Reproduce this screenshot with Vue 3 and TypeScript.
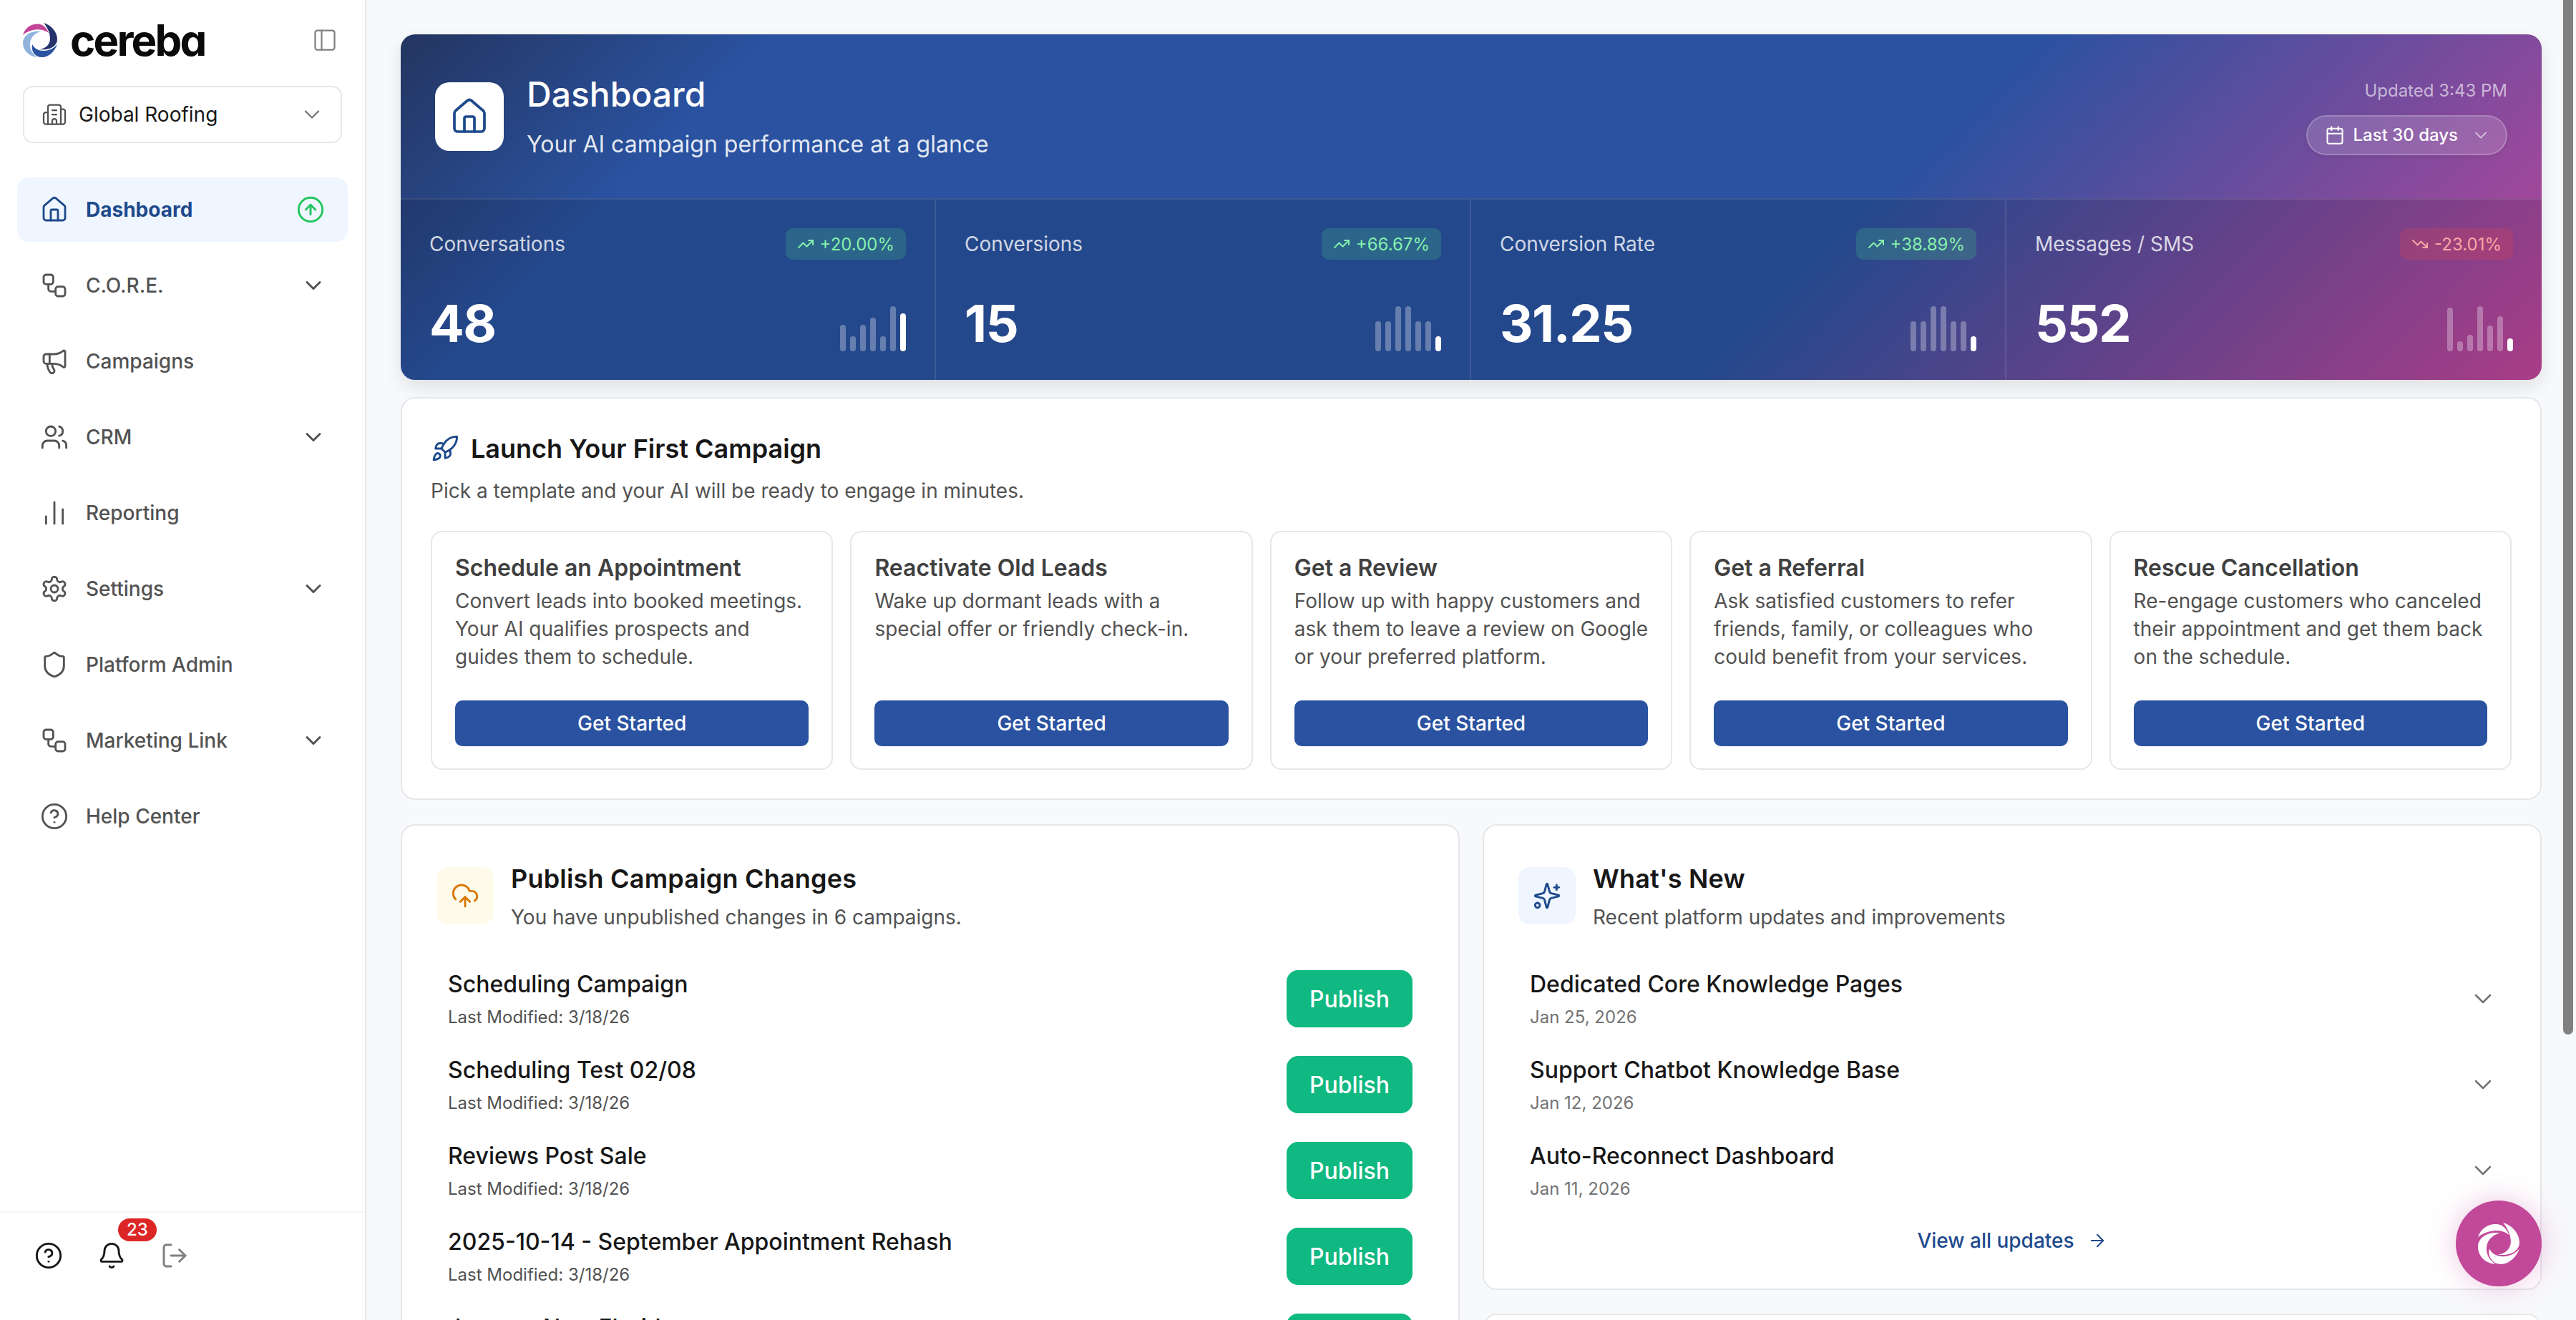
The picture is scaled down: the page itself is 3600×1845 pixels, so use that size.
<script setup lang="ts">
const icons: Record<string, string> = {
  home: '<path d="M15 21v-8a1 1 0 0 0-1-1h-4a1 1 0 0 0-1 1v8"/><path d="M3 10a2 2 0 0 1 .709-1.528l7-5.999a2 2 0 0 1 2.582 0l7 5.999A2 2 0 0 1 21 10v9a2 2 0 0 1-2 2H5a2 2 0 0 1-2-2z"/>',
  workflow: '<rect x="3" y="3" width="8" height="8" rx="2"/><path d="M7 11v4a2 2 0 0 0 2 2h4"/><rect x="13" y="13" width="8" height="8" rx="2"/>',
  megaphone: '<path d="M11 6a13 13 0 0 0 8.4-2.8A1 1 0 0 1 21 4v12a1 1 0 0 1-1.6.8A13 13 0 0 0 11 14H5a2 2 0 0 1-2-2V8a2 2 0 0 1 2-2z"/><path d="M6 14a12 12 0 0 0 2.4 7.2 2 2 0 0 0 3.2-2.4A8 8 0 0 1 10 14"/><path d="M8 6v8"/>',
  users: '<path d="M16 21v-2a4 4 0 0 0-4-4H6a4 4 0 0 0-4 4v2"/><circle cx="9" cy="7" r="4"/><path d="M22 21v-2a4 4 0 0 0-3-3.87"/><path d="M16 3.13a4 4 0 0 1 0 7.75"/>',
  chart: '<path d="M5 21v-6"/><path d="M12 21V3"/><path d="M19 21V9"/>',
  settings: '<path d="M12.22 2h-.44a2 2 0 0 0-2 2v.18a2 2 0 0 1-1 1.73l-.43.25a2 2 0 0 1-2 0l-.15-.08a2 2 0 0 0-2.73.73l-.22.38a2 2 0 0 0 .73 2.73l.15.1a2 2 0 0 1 1 1.72v.51a2 2 0 0 1-1 1.74l-.15.09a2 2 0 0 0-.73 2.73l.22.38a2 2 0 0 0 2.73.73l.15-.08a2 2 0 0 1 2 0l.43.25a2 2 0 0 1 1 1.73V20a2 2 0 0 0 2 2h.44a2 2 0 0 0 2-2v-.18a2 2 0 0 1 1-1.73l.43-.25a2 2 0 0 1 2 0l.15.08a2 2 0 0 0 2.73-.73l.22-.39a2 2 0 0 0-.73-2.73l-.15-.08a2 2 0 0 1-1-1.74v-.5a2 2 0 0 1 1-1.74l.15-.09a2 2 0 0 0 .73-2.73l-.22-.38a2 2 0 0 0-2.73-.73l-.15.08a2 2 0 0 1-2 0l-.43-.25a2 2 0 0 1-1-1.73V4a2 2 0 0 0-2-2z"/><circle cx="12" cy="12" r="3"/>',
  shield: '<path d="M20 13c0 5-3.5 7.5-7.66 8.95a1 1 0 0 1-.67-.01C7.5 20.5 4 18 4 13V6a1 1 0 0 1 1-1c2 0 4.5-1.2 6.24-2.72a1.17 1.17 0 0 1 1.52 0C14.51 3.81 17 5 19 5a1 1 0 0 1 1 1z"/>',
  help: '<circle cx="12" cy="12" r="10"/><path d="M9.09 9a3 3 0 0 1 5.83 1c0 2-3 3-3 3"/><path d="M12 17h.01"/>',
  building: '<path d="M10 12h4"/><path d="M10 8h4"/><path d="M14 21v-3a2 2 0 0 0-4 0v3"/><path d="M6 10H4a2 2 0 0 0-2 2v7a2 2 0 0 0 2 2h16a2 2 0 0 0 2-2V9a2 2 0 0 0-2-2h-2"/><path d="M6 21V5a2 2 0 0 1 2-2h8a2 2 0 0 1 2 2v16"/>',
  chevron: '<path d="m6 9 6 6 6-6"/>',
  upcircle: '<circle cx="12" cy="12" r="10"/><path d="m16 12-4-4-4 4"/><path d="M12 16V8"/>',
  panel: '<rect x="3" y="3" width="18" height="18" rx="2"/><path d="M9 3v18"/>',
  bell: '<path d="M10.268 21a2 2 0 0 0 3.464 0"/><path d="M3.262 15.326A1 1 0 0 0 4 17h16a1 1 0 0 0 .74-1.673C19.41 13.956 18 12.499 18 8A6 6 0 0 0 6 8c0 4.499-1.411 5.956-2.738 7.326"/>',
  logout: '<path d="m16 17 5-5-5-5"/><path d="M21 12H9"/><path d="M9 21H5a2 2 0 0 1-2-2V5a2 2 0 0 1 2-2h4"/>',
  rocket: '<path d="M4.5 16.5c-1.5 1.26-2 5-2 5s3.74-.5 5-2c.71-.84.7-2.13-.09-2.91a2.18 2.18 0 0 0-2.91-.09z"/><path d="m12 15-3-3a22 22 0 0 1 2-3.95A12.88 12.88 0 0 1 22 2c0 2.72-.78 7.5-6 11a22.35 22.35 0 0 1-4 2z"/><path d="M9 12H4s.55-3.03 2-4c1.62-1.08 5 0 5 0"/><path d="M12 15v5s3.03-.55 4-2c1.08-1.62 0-5 0-5"/>',
  cloud: '<path d="M12 13v8"/><path d="M4 14.899A7 7 0 1 1 15.71 8h1.79a4.5 4.5 0 0 1 2.5 8.242"/><path d="m8 17 4-4 4 4"/>',
  sparkles: '<path d="M9.937 15.5A2 2 0 0 0 8.5 14.063l-6.135-1.582a.5.5 0 0 1 0-.962L8.5 9.936A2 2 0 0 0 9.937 8.5l1.582-6.135a.5.5 0 0 1 .963 0L14.063 8.5A2 2 0 0 0 15.5 9.937l6.135 1.581a.5.5 0 0 1 0 .964L15.5 14.063a2 2 0 0 0-1.437 1.437l-1.582 6.135a.5.5 0 0 1-.963 0z"/><path d="M20 3v4"/><path d="M22 5h-4"/><circle cx="4" cy="20" r="2"/>',
  calendar: '<path d="M8 2v4"/><path d="M16 2v4"/><rect x="3" y="4" width="18" height="18" rx="2"/><path d="M3 10h18"/>',
  arrow: '<path d="M5 12h14"/><path d="m12 5 7 7-7 7"/>',
  up: '<path d="M16 7h6v6"/><path d="m22 7-8.5 8.5-5-5L2 17"/>',
  down: '<path d="M16 17h6v-6"/><path d="m22 17-8.5-8.5-5 5L2 7"/>',
}

const swirl = [
  'M0 17C3 6 14 0 24 2C29 3 33 7 36 14C31 10 24 8.500 17 9.500C10 10.500 4 13 0 17Z',
  'M29 0C40 3 48 13 48 23C48 32 38 39 23 37C32 36 38 30 38 22C38 14 34 6 29 0Z',
  'M48 30C44 41 35 48 27 48C18 48 11 41 13 30C16 36 22 39 29 39C36 39 43 36 48 30Z',
  'M25 12C12 10 0 17 0 28C0 38 8 47 20 48C13 43 9 36 10 28C11 20 17 14 25 12Z',
]
const swirlColors = ['#c2459a', '#27336b', '#2a52a0', '#8fb3dc']

const nav = [
  { label: 'Dashboard', icon: 'home', active: true },
  { label: 'C.O.R.E.', icon: 'workflow', more: true },
  { label: 'Campaigns', icon: 'megaphone' },
  { label: 'CRM', icon: 'users', more: true },
  { label: 'Reporting', icon: 'chart' },
  { label: 'Settings', icon: 'settings', more: true },
  { label: 'Platform Admin', icon: 'shield' },
  { label: 'Marketing Link', icon: 'workflow', more: true },
  { label: 'Help Center', icon: 'help' },
]

const stats = [
  { label: 'Conversations', delta: '+20.00%', up: true, value: '48', bars: [37, 21, 37, 47, 21, 63, 53] },
  { label: 'Conversions', delta: '+66.67%', up: true, value: '15', bars: [42, 42, 63, 63, 42, 42, 21] },
  { label: 'Conversion Rate', delta: '+38.89%', up: true, value: '31.25', bars: [42, 42, 63, 63, 42, 42, 21] },
  { label: 'Messages / SMS', delta: '-23.01%', up: false, value: '552', bars: [61, 14, 23, 63, 36, 49, 18] },
]

const templates = [
  { title: 'Schedule an Appointment', text: 'Convert leads into booked meetings. Your AI qualifies prospects and guides them to schedule.' },
  { title: 'Reactivate Old Leads', text: 'Wake up dormant leads with a special offer or friendly check-in.' },
  { title: 'Get a Review', text: 'Follow up with happy customers and ask them to leave a review on Google or your preferred platform.' },
  { title: 'Get a Referral', text: 'Ask satisfied customers to refer friends, family, or colleagues who could benefit from your services.' },
  { title: 'Rescue Cancellation', text: 'Re-engage customers who canceled their appointment and get them back on the schedule.' },
]

const campaigns = ['Scheduling Campaign', 'Scheduling Test 02/08', 'Reviews Post Sale', '2025-10-14 - September Appointment Rehash', 'January New Florida']

const updates = [
  { title: 'Dedicated Core Knowledge Pages', date: 'Jan 25, 2026' },
  { title: 'Support Chatbot Knowledge Base', date: 'Jan 12, 2026' },
  { title: 'Auto-Reconnect Dashboard', date: 'Jan 11, 2026' },
]
</script>

<template>
  <div class="app">
    <aside class="side">
      <div class="brand">
        <div class="logo">
          <svg class="mark" viewBox="0 0 48 48"><path v-for="(d, i) in swirl" :key="i" :d="d" :fill="swirlColors[i]" /></svg>
          <span class="word">cereba</span>
        </div>
        <svg class="ic panel" viewBox="0 0 24 24" v-html="icons.panel" />
      </div>
      <div class="org">
        <svg class="ic org-ic" viewBox="0 0 24 24" v-html="icons.building" />
        <span class="org-name">Global Roofing</span>
        <svg class="ic org-chev" viewBox="0 0 24 24" v-html="icons.chevron" />
      </div>
      <nav class="nav">
        <div v-for="n in nav" :key="n.label" class="nav-item" :class="{ active: n.active }">
          <svg class="ic nav-ic" viewBox="0 0 24 24" v-html="icons[n.icon]" />
          <span class="nav-label">{{ n.label }}</span>
          <svg v-if="n.active" class="ic nav-up" viewBox="0 0 24 24" v-html="icons.upcircle" />
          <svg v-if="n.more" class="ic nav-chev" viewBox="0 0 24 24" v-html="icons.chevron" />
        </div>
      </nav>
      <div class="foot">
        <div class="foot-btn"><svg class="ic foot-ic" viewBox="0 0 24 24" v-html="icons.help" /></div>
        <div class="foot-btn">
          <svg class="ic foot-ic" viewBox="0 0 24 24" v-html="icons.bell" />
          <span class="count">23</span>
        </div>
        <div class="foot-btn grey"><svg class="ic foot-ic" viewBox="0 0 24 24" v-html="icons.logout" /></div>
      </div>
    </aside>

    <main class="main">
      <section class="hero">
        <div class="hero-top">
          <div class="hero-left">
            <div class="hero-icon"><svg class="ic hero-home" viewBox="0 0 24 24" v-html="icons.home" /></div>
            <div class="hero-text">
              <h1>Dashboard</h1>
              <p>Your AI campaign performance at a glance</p>
            </div>
          </div>
          <div class="hero-right">
            <div class="updated">Updated 3:43 PM</div>
            <div class="range">
              <svg class="ic range-ic" viewBox="0 0 24 24" v-html="icons.calendar" />
              <span>Last 30 days</span>
              <svg class="ic range-chev" viewBox="0 0 24 24" v-html="icons.chevron" />
            </div>
          </div>
        </div>
        <div class="stats">
          <div v-for="s in stats" :key="s.label" class="stat">
            <div class="stat-top">
              <span class="stat-label">{{ s.label }}</span>
              <span class="delta" :class="s.up ? 'pos' : 'neg'">
                <svg class="ic delta-ic" viewBox="0 0 24 24" v-html="icons[s.up ? 'up' : 'down']" />{{ s.delta }}
              </span>
            </div>
            <div class="stat-bottom">
              <span class="stat-value">{{ s.value }}</span>
              <div class="bars">
                <i v-for="(b, i) in s.bars" :key="i" :style="{ height: b + 'px' }" />
              </div>
            </div>
          </div>
        </div>
      </section>

      <section class="card launch">
        <div class="launch-head">
          <svg class="ic rocket" viewBox="0 0 24 24" v-html="icons.rocket" />
          <h2>Launch Your First Campaign</h2>
        </div>
        <p class="launch-sub">Pick a template and your AI will be ready to engage in minutes.</p>
        <div class="templates">
          <div v-for="t in templates" :key="t.title" class="tpl">
            <h3>{{ t.title }}</h3>
            <p>{{ t.text }}</p>
            <div class="tpl-btn">Get Started</div>
          </div>
        </div>
      </section>

      <div class="columns">
        <section class="card panel-card">
          <div class="panel-head">
            <div class="panel-icon amber"><svg class="ic panel-ic" viewBox="0 0 24 24" v-html="icons.cloud" /></div>
            <div>
              <h2>Publish Campaign Changes</h2>
              <p>You have unpublished changes in 6 campaigns.</p>
            </div>
          </div>
          <div v-for="c in campaigns" :key="c" class="row">
            <div class="row-text">
              <div class="row-title">{{ c }}</div>
              <div class="row-sub">Last Modified: 3/18/26</div>
            </div>
            <div class="publish">Publish</div>
          </div>
        </section>

        <div class="right-col">
          <section class="card panel-card news">
            <div class="panel-head">
              <div class="panel-icon blue"><svg class="ic panel-ic" viewBox="0 0 24 24" v-html="icons.sparkles" /></div>
              <div>
                <h2>What's New</h2>
                <p>Recent platform updates and improvements</p>
              </div>
            </div>
            <div v-for="u in updates" :key="u.title" class="row">
              <div class="row-text">
                <div class="row-title">{{ u.title }}</div>
                <div class="row-sub light">{{ u.date }}</div>
              </div>
              <svg class="ic row-chev" viewBox="0 0 24 24" v-html="icons.chevron" />
            </div>
            <div class="view-all">
              <span>View all updates</span>
              <svg class="ic view-arrow" viewBox="0 0 24 24" v-html="icons.arrow" />
            </div>
          </section>
          <section class="card next-card"></section>
        </div>
      </div>
    </main>

    <div class="thumb"></div>
    <div class="fab">
      <svg class="fab-mark" viewBox="0 0 48 48"><path v-for="(d, i) in swirl" :key="i" :d="d" /></svg>
    </div>
  </div>
</template>

<style>
html, body { margin: 0; overflow: hidden; background: #f8f9fb; }
</style>

<style scoped>
* { box-sizing: border-box; }
h1, h2, h3, p { margin: 0; }
.app { position: relative; display: flex; width: 100%; height: 100vh; overflow: hidden; background: #f8f9fb; font-family: Inter, "Liberation Sans", sans-serif; color: #171717; }
.ic { fill: none; stroke: currentColor; stroke-width: 1.75; stroke-linecap: round; stroke-linejoin: round; flex: none; }

.side { flex: none; width: 512px; height: 100%; background: #fff; border-right: 2px solid #e5e7eb; display: flex; flex-direction: column; }
.brand { height: 120px; padding: 32px 38px 40px 32px; display: flex; justify-content: space-between; align-items: center; }
.logo { display: flex; align-items: center; gap: 18px; }
.mark { width: 48px; height: 48px; }
.word { font-size: 60px; line-height: 48px; font-weight: 700; letter-spacing: -2.8px; color: #0a0a0a; font-feature-settings: "cv11" 1; }
.panel { width: 36px; height: 36px; color: #808080; stroke-width: 1.5; }
.org { margin: 0 32px; height: 80px; border: 2px solid #e5e7eb; border-radius: 14px; display: flex; align-items: center; padding: 0 22px 0 24px; }
.org-ic { width: 36px; height: 36px; color: #525252; stroke-width: 1.5; }
.org-name { flex: 1; margin-left: 16px; font-size: 28px; line-height: 40px; }
.org-chev { width: 36px; height: 36px; color: #737373; stroke-width: 1.5; }
.nav { padding: 48px 24px 0; display: flex; flex-direction: column; gap: 16px; flex: 1; }
.nav-item { height: 90px; border-radius: 16px; display: flex; align-items: center; padding: 0 32px; color: #525252; font-size: 28px; font-weight: 500; }
.nav-item.active { background: #eff6ff; color: #1e4a8c; font-weight: 700; }
.nav-ic { width: 40px; height: 40px; margin-right: 24px; stroke-width: 1.7; }
.nav-label { flex: 1; }
.nav-up { width: 40px; height: 40px; color: #22c55e; }
.nav-chev { width: 36px; height: 36px; color: #525252; stroke-width: 2; margin-right: -2px; }
.foot { height: 152px; border-top: 2px solid #f3f4f6; padding: 22px 32px 0; display: flex; gap: 16px; align-items: flex-start; }
.foot-btn { position: relative; width: 72px; height: 72px; display: flex; align-items: center; justify-content: center; margin-top: 2px; color: #171717; }
.foot-btn.grey { color: #808080; }
.foot-ic { width: 40px; height: 40px; }
.count { position: absolute; left: 45px; top: -16px; height: 32px; min-width: 54px; padding: 0 10px; background: #dc2626; border-radius: 16px; color: #fff; font-size: 24px; line-height: 32px; font-weight: 500; text-align: center; }

.main { flex: 1; min-width: 0; height: 100%; padding: 48px 48px 0; display: flex; flex-direction: column; overflow: hidden; }
.hero { flex: none; border-radius: 20px; overflow: hidden; color: #fff; background: linear-gradient(135deg, #243560 0%, #2a52a0 15%, #2a52a0 66%, #c2459a 100%); box-shadow: 0 10px 24px rgba(0, 0, 0, 0.1); }
.hero-top { height: 229px; padding: 0 48px; display: flex; justify-content: space-between; align-items: center; }
.hero-left { display: flex; align-items: center; gap: 32px; }
.hero-icon { width: 96px; height: 96px; background: #fff; border-radius: 20px; display: flex; align-items: center; justify-content: center; }
.hero-home { width: 56px; height: 56px; color: #1e4a8c; stroke-width: 1.6; }
.hero-text h1 { font-size: 48px; line-height: 64px; font-weight: 500; }
.hero-text p { margin-top: 14px; font-size: 32px; line-height: 48px; color: rgba(255, 255, 255, 0.88); }
.hero-right { display: flex; flex-direction: column; align-items: flex-end; gap: 16px; }
.updated { font-size: 24px; line-height: 36px; color: rgba(255, 255, 255, 0.62); }
.range { height: 56px; padding: 0 21px 0 24px; border-radius: 28px; background: rgba(255, 255, 255, 0.15); border: 2px solid rgba(255, 255, 255, 0.2); display: flex; align-items: center; font-size: 24px; font-weight: 500; box-shadow: 0 2px 6px rgba(0, 0, 0, 0.08); }
.range-ic { width: 28px; height: 28px; margin-right: 12px; stroke-width: 1.75; }
.range-chev { width: 28px; height: 28px; margin-left: 18px; stroke-width: 1.5; opacity: 0.7; }
.stats { border-top: 2px solid rgba(255, 255, 255, 0.1); background: rgba(0, 0, 0, 0.12); display: grid; grid-template-columns: repeat(4, 1fr); }
.stat { padding: 40px; border-right: 2px solid rgba(255, 255, 255, 0.1); }
.stat:last-child { border-right: none; }
.stat-top { display: flex; justify-content: space-between; align-items: center; height: 44px; }
.stat-label { font-size: 28px; line-height: 40px; color: rgba(255, 255, 255, 0.8); }
.delta { height: 44px; padding: 0 16px; border-radius: 10px; display: flex; align-items: center; gap: 8px; font-size: 24px; font-weight: 400; }
.delta.pos { background: rgba(74, 222, 128, 0.2); color: #86efac; }
.delta.neg { background: rgba(239, 68, 68, 0.2); color: #fca5a5; }
.delta-ic { width: 24px; height: 24px; stroke-width: 2; }
.stat-bottom { margin-top: 64px; height: 64px; display: flex; justify-content: space-between; align-items: flex-end; }
.stat-value { font-size: 72px; line-height: 72px; font-weight: 700; margin-bottom: 3px; letter-spacing: -1.4px; }
.bars { display: flex; gap: 6px; align-items: flex-end; height: 64px; }
.bars i { display: block; width: 8px; border-radius: 4px; background: rgba(255, 255, 255, 0.3); }
.bars i:last-child { background: #fff; }

.card { background: #fff; border: 2px solid #e5e7eb; border-radius: 20px; }
.launch { flex: none; margin-top: 24px; height: 563px; padding: 42px 40px 0; }
.launch-head { display: flex; align-items: center; gap: 16px; height: 56px; }
.rocket { width: 40px; height: 40px; color: #1e4a8c; }
.launch-head h2 { font-size: 36px; line-height: 56px; font-weight: 600; }
.launch-sub { margin-top: 11px; font-size: 28px; line-height: 40px; color: #525252; }
.templates { margin-top: 36px; display: grid; grid-template-columns: repeat(5, 1fr); gap: 24px; }
.tpl { height: 334px; border: 2px solid #e5e7eb; border-radius: 16px; padding: 26px 32px 31px; display: flex; flex-direction: column; }
.tpl h3 { font-size: 32px; line-height: 48px; font-weight: 600; color: #404040; }
.tpl p { margin-top: 3px; font-size: 28px; line-height: 39.2px; color: #525252; }
.tpl-btn { margin-top: auto; height: 64px; border-radius: 10px; background: #2a52a0; color: #fff; font-size: 28px; font-weight: 500; display: flex; align-items: center; justify-content: center; }

.columns { flex: none; margin-top: 34px; display: grid; grid-template-columns: 1480px 1fr; gap: 32px; }
.panel-card { padding: 58px 48px 0; }
.panel-head { display: flex; gap: 24px; height: 80px; }
.panel-head h2 { font-size: 36px; line-height: 40px; font-weight: 600; letter-spacing: 0.2px; margin-top: -4px; }
.panel-head p { margin-top: 14px; font-size: 28px; line-height: 40px; color: #525252; }
.panel-icon { flex: none; width: 80px; height: 80px; border-radius: 16px; display: flex; align-items: center; justify-content: center; }
.panel-icon.amber { background: #fffbeb; color: #d97706; }
.panel-icon.blue { background: #eff6ff; color: #1e4a8c; }
.panel-ic { width: 40px; height: 40px; }
.panel-head + .row { margin-top: 44px; }
.row { height: 120px; padding: 0 16px; display: flex; justify-content: space-between; align-items: center; }
.row-text { margin-bottom: 2px; }
.row-title { font-size: 32px; line-height: 48px; font-weight: 500; color: #171717; }
.row-sub { margin-top: 6px; font-size: 24px; line-height: 32px; color: #525252; }
.row-sub.light { color: #737373; }
.publish { width: 176px; height: 80px; border-radius: 16px; background: #10b981; color: #fff; font-size: 32px; font-weight: 500; display: flex; align-items: center; justify-content: center; }
.row-chev { width: 40px; height: 40px; color: #737373; stroke-width: 1.5; margin-right: -4px; }
.right-col { display: flex; flex-direction: column; gap: 33px; }
.news { height: 651px; }
.view-all { margin-top: 18px; display: flex; justify-content: center; align-items: center; gap: 18px; color: #1e4a8c; font-size: 28px; line-height: 40px; font-weight: 500; }
.view-arrow { width: 28px; height: 28px; }
.next-card { height: 200px; }

.thumb { position: absolute; right: 4px; top: 0; width: 14px; height: 1446px; background: #808080; border-radius: 0 0 7px 7px; }
.fab { position: absolute; right: 48px; bottom: 47px; width: 120px; height: 120px; border-radius: 50%; background: #c2489a; box-shadow: 0 0 40px rgba(194, 72, 154, 0.3); display: flex; align-items: center; justify-content: center; }
.fab-mark { width: 58px; height: 58px; fill: #fff; }
</style>
